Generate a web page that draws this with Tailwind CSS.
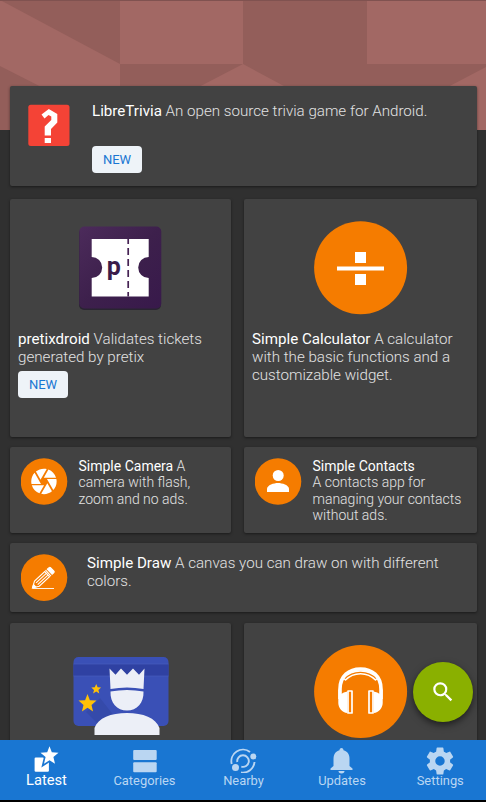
<!DOCTYPE html>
<html lang="en"><head><meta charset="utf-8"><title>Latest apps</title>
<script src="https://cdn.jsdelivr.net/npm/@tailwindcss/browser@4"></script></head>
<body class="bg-[#303030]">
<main class="relative flex h-[802px] w-[486px] flex-col overflow-hidden bg-[#303030] font-['Roboto',sans-serif] font-light text-[#e2e2e2]">
<svg class="absolute left-0 top-0 h-[130px] w-[486px]" viewBox="0 0 486 130"><path fill="#a26864" d="M0 0h486v130H0z"/><g fill="#935e5a"><path d="M0 0h120v64zM0 66l126 64H0zM120 64h123l-123 64zM243 0h124v64h119v3L366 130 243 64z"/></g><path d="M0 .5h486" stroke="#805250"/></svg>
<div class="relative flex min-h-0 grow flex-col gap-[10px] overflow-hidden pl-[10px] pr-[9px] pt-[86px]">
<section class="mb-[3px] flex h-[100px] shrink-0 rounded-[2px] bg-[#424242] pl-[18px] pt-[18px] shadow-[0_1px_3px_#0007]">
<svg class="h-[42px] w-[42px]" viewBox="0 0 42 42"><rect x=".3" y=".8" width="41.200" height="41.200" rx="2.500" fill="#f44336"/><path fill="#fff" d="M13.500 10.500 20.800 5l8.500 5v8.500L23 25v6.500h-6.300V22.500l6.600-6.500v-3.500L20.500 11l-4 3.500zM16.700 34H23v5h-6.300z"/></svg>
<div class="ml-[22px] -mt-[2px] text-[15.150px] leading-[18px]"><p><b class="font-normal text-white">LibreTrivia</b> An open source trivia game for Android.</p><span class="mt-[26px] flex h-[27px] w-[50px] items-center justify-center rounded-[4px] bg-[#eef3f8] text-[13px] font-normal text-[#1976d2]">NEW</span></div>
</section>
<div class="grid h-[238px] shrink-0 grid-cols-[221px_233px] gap-[13px]">
<section class="rounded-[2px] bg-[#424242] px-[8px] pt-[27px] shadow-[0_1px_3px_#0007]">
<svg class="ml-[60px] h-[84px] w-[84px]" viewBox="0 0 84 84"><defs><linearGradient id="purple" x2="1" y2="1"><stop stop-color="#4c2b5b"/><stop offset=".5" stop-color="#3d204c"/><stop offset="1" stop-color="#38194b"/></linearGradient></defs><rect x="1" y="2" width="82" height="82" rx="5" fill="#292431"/><rect x="1.300" y=".5" width="82" height="82" rx="5" fill="url(#purple)"/><path fill="#fff" d="M13.700 13h57v18a10.500 10.500 0 0 0 0 21v18.500h-57V52a10.500 10.500 0 0 0 0-21z"/><path d="M50.200 13v57.500" stroke="#452253" stroke-width="1.700" stroke-dasharray="7 4" stroke-dashoffset="2"/><text x="28.800" y="49" font-family="Roboto" font-size="25" font-weight="700" fill="#3b1c4a">p</text></svg>
<p class="mt-[20px] text-[15.150px] leading-[18px]"><b class="font-normal text-white">pretixdroid</b> Validates tickets<br>generated by pretix</p><span class="mt-[5px] flex h-[27px] w-[50px] items-center justify-center rounded-[4px] bg-[#eef3f8] text-[13px] font-normal text-[#1976d2]">NEW</span>
</section>
<section class="rounded-[2px] bg-[#424242] px-[8px] pt-[22px] shadow-[0_1px_3px_#0007]">
<svg class="ml-[62px] h-[94px] w-[94px]" viewBox="0 0 94 94"><circle cx="46.600" cy="46.700" r="46.500" fill="#f57c00"/><path fill="#fff" d="M41 31h11v11H41zM23 45.500h47v4H23zM41 53h11v11H41z"/></svg>
<p class="mt-[15px] text-[15.150px] leading-[18px]"><b class="font-normal text-white">Simple Calculator</b> A calculator<br>with the basic functions and a<br>customizable widget.</p>
</section></div>
<div class="grid h-[86px] shrink-0 grid-cols-[221px_233px] gap-[13px]">
<section class="flex rounded-[2px] bg-[#424242] pl-[11px] pt-[11px] shadow-[0_1px_3px_#0007]"><svg class="h-[47px] w-[47px] shrink-0" viewBox="0 0 47 47"><circle cx="23" cy="23.500" r="23.300" fill="#f57c00"/><path transform="translate(7.700 8.200) scale(1.270)" fill="#fff" d="M9.400 10.500l4.770-8.260C13.470 2.090 12.750 2 12 2c-2.400 0-4.600.85-6.320 2.250l3.660 6.350.06-.1zM21.540 9c-.92-2.920-3.150-5.260-6-6.340L11.880 9h9.660zm.26 1h-7.490l.29.5 4.760 8.250C21 16.970 22 14.610 22 12c0-.69-.07-1.350-.2-2zM8.540 12l-3.900-6.750C3.010 7.030 2 9.390 2 12c0 .69.07 1.350.2 2h7.490l-1.150-2zm-6.080 3c.92 2.920 3.150 5.260 6 6.340L12.120 15H2.460zm11.270 0l-3.900 6.760c.7.15 1.420.24 2.170.24 2.400 0 4.600-.85 6.320-2.250l-3.660-6.350-.93 1.600z"/></svg><p class="ml-[10.500px] w-[125px] text-[14px] leading-[16.400px]"><b class="font-normal text-white">Simple Camera</b> A<br>camera with flash,<br>zoom and no ads.</p></section>
<section class="flex rounded-[2px] bg-[#424242] pl-[11px] pt-[11px] shadow-[0_1px_3px_#0007]"><svg class="h-[47px] w-[47px] shrink-0" viewBox="0 0 47 47"><circle cx="23" cy="23.500" r="23.300" fill="#f57c00"/><circle cx="23.200" cy="17.500" r="5.500" fill="#fff"/><path fill="#fff" d="M12 34v-3c0-4 7-6 11-6s11 2 11 6v3z"/></svg><p class="ml-[10.500px] text-[14px] leading-[16.400px]"><b class="font-normal text-white">Simple Contacts</b><br>A contacts app for<br>managing your contacts<br>without ads.</p></section>
</div>
<section class="mb-[1px] flex h-[69px] shrink-0 rounded-[2px] bg-[#424242] pl-[11px] pt-[11px] shadow-[0_1px_3px_#0007]"><svg class="h-[47px] w-[47px] shrink-0" viewBox="0 0 47 47"><circle cx="23" cy="23.600" r="23.300" fill="#f57c00"/><g transform="translate(11.500 33.800) rotate(-43)" fill="none" stroke="#fff"><path d="m0 0 6-3.500h14v7H6zM6-1.200h14M6 1.200h14" stroke-width="1.100"/><path d="m0 0 3-1.700v3.400z" fill="#fff"/><path d="M21.500-4v8" stroke-width="1.200"/><path d="M23.500-3.500h2.500q1 0 1 1v5q0 1-1 1h-2.500z" stroke-width="1" fill="#fff"/></g><path d="M11.500 34.500H33" stroke="#fff" stroke-width=".9"/></svg><p class="ml-[19px] text-[15.150px] leading-[18px]"><b class="font-normal text-white">Simple Draw</b> A canvas you can draw on with different<br>colors.</p></section>
<div class="grid h-[238px] shrink-0 grid-cols-[221px_233px] gap-[13px]">
<section class="rounded-[2px] bg-[#424242] pt-[33px] shadow-[0_1px_3px_#0007]"><svg class="ml-[62.500px] h-[80px] w-[96px]" viewBox="0 0 96 80"><rect x=".5" y="1" width="95" height="69" rx="5" fill="#3a50b6"/><path d="M.5 8h95v12H.5z" fill="#2f41a2"/><path d="M.5 20h95M.5 8h95" stroke="#485bbd" stroke-width=".7"/><path d="m13 56 14 14h22L27 42z" fill="#354aaa"/><g fill="#eceff7"><path d="m36.500 12.500 6 6.200 5.500-6.200 6 6.200 6-6.200 6 6.200 5.500-6.200-1 20.500Q54 30 37.500 33zM37.500 35.500Q54 32.500 70.500 35.500C71 47 64 54.500 54 54.500S37 47 37.500 35.500zM21.500 79v-7C25 62 38 57 54 57s29 5 32.500 15v7z"/></g><path fill="#ffc107" d="m14.500 38 2.400 6.200 6.600.4-5 4.300 1.600 6.500-5.600-3.600-5.600 3.600 1.600-6.500-5-4.300 6.600-.4zm8.700-10 1.400 3.300 3.500.3-2.700 2.300.9 3.500-3.100-1.900-3.100 1.900.9-3.500-2.700-2.300 3.500-.3z"/></svg></section>
<section class="rounded-[2px] bg-[#424242] pt-[22px] shadow-[0_1px_3px_#0007]"><svg class="ml-[70px] h-[94px] w-[94px]" viewBox="0 0 94 94"><circle cx="46.600" cy="46.500" r="46.500" fill="#f57c00"/><g fill="none" stroke="#fff" stroke-linejoin="round"><path d="M26 54V44c0-13 9-20 20.500-20S67 31 67 44v10" stroke-width="3.600"/><path d="M31.500 35c8-8.500 22-8.500 30 0l2-2c-9-9.500-25-9.500-34 0z" stroke-width="1.500"/><path d="M34 46h4v22h-4zM55 46h4v22h-4z" stroke-width="1.700"/></g><path fill="#fff" d="M24.300 44l3 5q2-1.800 6-2.500V68c-5-.5-9-5-9-10zM68.700 44l-3 5q-2-1.800-6-2.500V68c5-.5 9-5 9-10z"/></svg></section></div>
</div>
<button class="absolute left-[412.500px] top-[662px] flex h-[60px] w-[60px] items-center justify-center rounded-full bg-[#8ab000] shadow-[0_3px_7px_#0008]"><svg class="h-[26px] w-[26px]" viewBox="0 0 24 24" fill="#fff"><path d="M15.500 14h-.79l-.28-.27A6.470 6.470 0 0 0 16 9.500 6.500 6.500 0 1 0 9.500 16c1.610 0 3.090-.59 4.230-1.570l.27.28v.79l5 4.990L20.490 19zm-6 0a4.500 4.500 0 1 1 0-9 4.500 4.500 0 0 1 0 9z"/></svg></button>
<nav class="relative flex h-[62px] shrink-0 border-b-2 border-black bg-[#1976d2] pt-[7px] text-[12.900px] font-normal leading-[16px] text-[#bad6f2]">
<div class="flex w-[93px] flex-col items-center text-[14.700px] text-white"><svg class="-mt-[1px] h-[26px] w-[26px]" viewBox="0 0 26 26" fill="#fff"><rect x=".6" y="11.500" width="14.300" height="14.300" rx="1.200"/><path id="star" d="M15.500.3l2.300 6 6.700.5-5.100 4.300 1.600 6.700-5.500-3.600-5.500 3.600 1.600-6.700L6.500 6.800l6.700-.5z" stroke="#1976d2" stroke-width="3.400"/><path d="M15.500.3l2.300 6 6.700.5-5.100 4.300 1.600 6.700-5.500-3.600-5.500 3.600 1.600-6.700L6.500 6.800l6.700-.5z"/></svg><span>Latest</span></div>
<div class="flex w-[103px] flex-col items-center"><svg class="h-[26px] w-[26px]" viewBox="0 0 26 26" fill="currentColor"><rect x="1.200" y="3" width="23.500" height="10" rx="1"/><rect x="1.200" y="15.200" width="23.500" height="10" rx="1"/></svg><span>Categories</span></div>
<div class="flex w-[95px] flex-col items-center"><svg class="h-[26px] w-[28px]" viewBox="0 0 28 26" fill="none" stroke="currentColor" stroke-width="1.900"><path d="M1.700 17A11.600 11.600 0 0 1 20 5M24.500 15A11.600 11.600 0 0 1 11 25.400M7.300 15a5.800 5.800 0 1 1 4 4.600"/><circle cx="5.500" cy="20.500" r="3.500" stroke="none" fill="currentColor"/><circle cx="23.300" cy="9.500" r="3" stroke="none" fill="currentColor"/></svg><span>Nearby</span></div>
<div class="flex w-[102px] flex-col items-center"><svg class="h-[26px] w-[26px] overflow-visible" viewBox="0 0 26 26" fill="currentColor"><path d="M12.500 1c1.300 0 2 1 2 2.300 4 1 6 4.200 6 8.700v7l3 2.500V23h-22v-1.500l3-2.500v-7c0-4.500 2-7.700 6-8.700C10.500 2 11.200 1 12.500 1zM9.500 24h6c0 1.500-1 2.500-3 2.500s-3-1-3-2.500z"/></svg><span>Updates</span></div>
<div class="flex w-[93px] flex-col items-center"><svg class="mt-[1px] ml-[1px] h-[25px] w-[26px] overflow-visible" viewBox="2 2 20 20" fill="currentColor"><path transform="scale(1.080) translate(-.9 -.5)" d="M19.430 12.980a7.800 7.800 0 0 0 0-1.960l2.110-1.650c.19-.15.240-.42.120-.64l-2-3.460c-.12-.22-.39-.3-.61-.22l-2.490 1a7.300 7.300 0 0 0-1.690-.98l-.38-2.650A.49.490 0 0 0 14 2h-4c-.25 0-.46.180-.49.420l-.38 2.650c-.61.250-1.170.59-1.690.98l-2.490-1c-.23-.09-.49 0-.61.220l-2 3.460c-.13.220-.07.490.12.640l2.110 1.650a7.900 7.900 0 0 0 0 1.960l-2.110 1.650c-.19.150-.24.420-.12.640l2 3.460c.12.220.39.300.61.220l2.490-1c.52.400 1.080.73 1.690.98l.38 2.650c.03.240.24.420.49.420h4c.25 0 .46-.18.490-.42l.38-2.650c.61-.25 1.170-.59 1.690-.98l2.490 1c.23.090.49 0 .61-.22l2-3.460c.12-.22.070-.49-.12-.64zM12 15.500a3.500 3.500 0 1 1 0-7 3.500 3.500 0 0 1 0 7z"/></svg><span class="ml-[1.500px]">Settings</span></div>
</nav></main></body></html>
